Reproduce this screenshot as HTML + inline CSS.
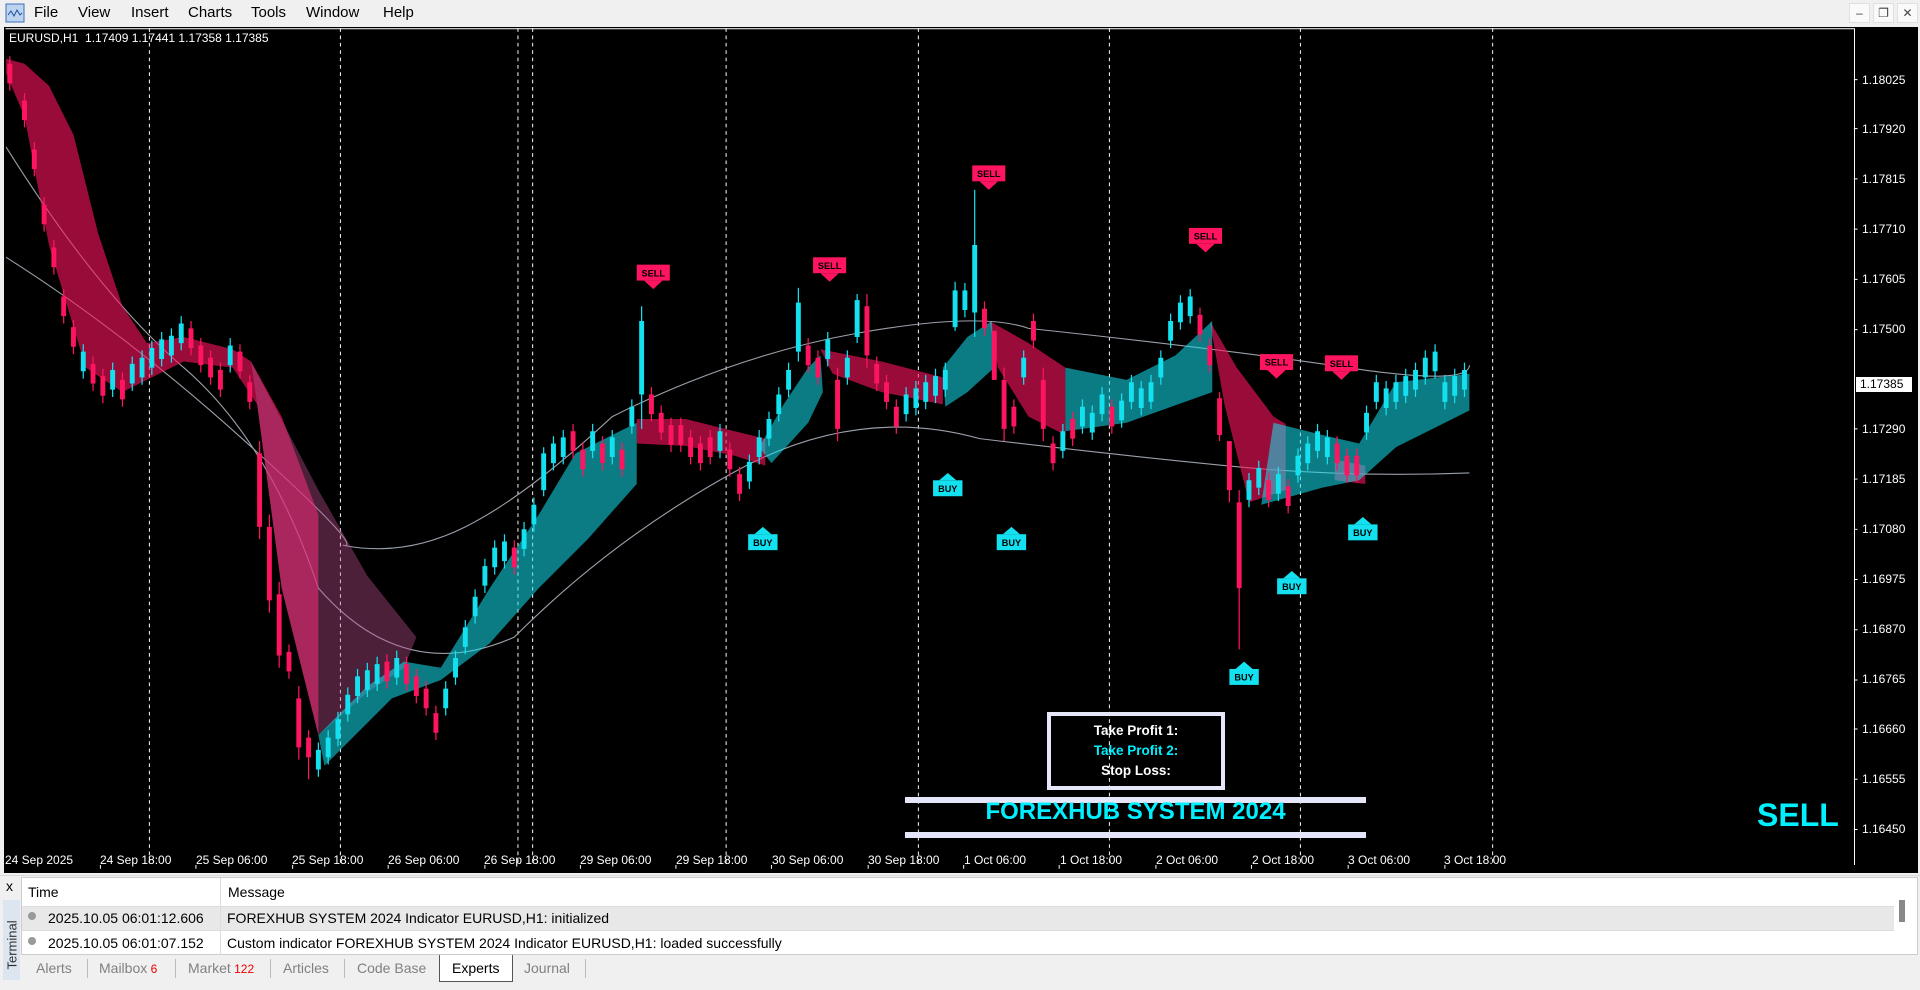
<!DOCTYPE html>
<html><head><meta charset="utf-8"><style>
*{margin:0;padding:0;box-sizing:border-box}
body{width:1920px;height:990px;overflow:hidden;background:#f0f0f0;font-family:"Liberation Sans",sans-serif;position:relative}
.a{position:absolute;white-space:nowrap}
.menu span{position:absolute;top:4px;font-size:15px;color:#000}
.wb{position:absolute;top:3px;width:21px;height:20px;background:#fafafa;border:1px solid #e0e0e0;font-size:12px;color:#444;text-align:center;line-height:18px}
.tl{position:absolute;top:853px;font-size:12px;color:#fff}
.pl{position:absolute;left:1862px;font-size:12px;color:#fff}
.tab{position:absolute;top:960px;font-size:14px;color:#808080}
</style></head><body>
<div class="menu">
<svg class="a" style="left:5px;top:3px" width="20" height="20" viewBox="0 0 20 20"><rect x="1" y="1" width="18" height="18" fill="#bcd4f0" stroke="#3a6fb8"/><path d="M3 12l3-4 3 5 3-6 3 5 2-2" stroke="#1f4f9a" fill="none"/></svg>
<span style="left:34px">File</span><span style="left:78px">View</span><span style="left:131px">Insert</span><span style="left:188px">Charts</span><span style="left:251px">Tools</span><span style="left:306px">Window</span><span style="left:383px">Help</span>
</div>
<div class="wb" style="left:1849px">–</div><div class="wb" style="left:1873px">❐</div><div class="wb" style="left:1897px">✕</div>
<div class="a" style="left:4px;top:27px;width:1914px;height:846px;background:#000"></div>
<svg class="a" style="left:0;top:0" width="1920" height="990" viewBox="0 0 1568 808" preserveAspectRatio="none">
<path d="M4.5 23.5H1514.5V706" stroke="#fff" stroke-width="0.8" fill="none"/>
<g stroke="#fff" stroke-width="0.8" stroke-dasharray="3,3">
<path d="M122 23V706M278 23V706M423 23V706M435 23V706M593 23V706M750 23V706M906 23V706M1062 23V706M1219 23V706"/></g>
<g stroke="#9aa0aa" stroke-width="0.9" fill="none">
<path d="M5 210Q100 270 200 360T280 445Q330 455 380 430T500 340Q600 290 700 272T840 268Q1000 285 1100 300T1200 298"/>
<path d="M5 120Q80 240 150 300T260 480Q330 560 420 520Q500 440 600 385T800 358Q900 370 1000 380T1200 386"/>
</g>
<g fill="#ff1460" opacity="0.6">
<path d="M5 60L20 95L40 200L70 300L100 320L150 295L190 300L210 330L230 480L260 600L260 420L230 340L205 295L190 285L150 275L120 280L100 250L80 190L60 110L40 70L20 52L5 48Z"/>
<path d="M520 342L560 342L600 352L625 358L625 380L600 372L560 364L520 362Z"/>
<path d="M670 285L720 295L770 308L770 330L720 320L680 305Z"/>
<path d="M808 262L840 280L870 300L870 355L840 340L815 300Z"/>
<path d="M988 262L1010 300L1040 340L1050 346L1050 400L1020 410L1000 330Z"/>
<path d="M1090 375L1115 380L1115 395L1090 392Z"/>
</g>
<path d="M205 295L260 400L300 470L340 520L330 545L300 565L260 600L230 480L210 330Z" fill="#c05090" opacity="0.4"/>
<g fill="#14e1f0" opacity="0.55">
<path d="M260 600L300 560L330 540L360 545L400 480L440 420L470 370L520 345L520 395L480 440L440 480L400 525L360 555L320 570L290 600L265 625Z"/>
<path d="M620 365L640 330L660 300L670 290L672 320L660 345L630 378Z"/>
<path d="M770 300L790 275L810 262L812 300L790 320L772 332Z"/>
<path d="M870 300L920 310L960 290L990 262L990 320L920 345L870 352Z"/>
<path d="M1040 345L1080 355L1110 362L1140 312L1200 305L1200 335L1140 365L1110 392L1080 398L1030 412Z"/>
</g>
<path stroke="#ff1460" stroke-width="1" d="M8 46v28M20 76v28M28 116v28M36 161v28M44 196v28M52 236v28M60 261v28M76 291v28M84 301v28M100 304v28M156 262v28M164 276v28M172 286v28M180 296v28M196 281v28M204 306v28M212 360v80M220 420v80M228 475v70M236 526v28M244 560v60M252 596v40M316 534v28M332 536v28M340 546v28M348 556v28M356 576v28M420 441v28M468 346v28M476 361v28M492 356v28M508 361v28M532 316v28M540 331v28M548 341v28M556 341v28M564 351v28M572 356v28M580 351v28M596 361v28M604 381v28M660 276v28M668 286v28M684 300v60M708 240v60M716 291v28M724 306v28M732 326v28M804 246v28M812 270v40M820 300v60M828 326v28M844 256v28M852 300v60M860 356v28M876 336v28M908 326v28M980 251v28M988 276v28M996 320v40M1004 360v50M1012 400v130M1036 386v28M1052 391v28M1092 356v28M1100 366v28M1108 366v28"/>
<path fill="#ff1460" d="M6 52h4v16h-4zM18 82h4v16h-4zM26 122h4v16h-4zM34 167h4v16h-4zM42 202h4v16h-4zM50 242h4v16h-4zM58 267h4v16h-4zM74 297h4v16h-4zM82 307h4v16h-4zM98 310h4v16h-4zM154 268h4v16h-4zM162 282h4v16h-4zM170 292h4v16h-4zM178 302h4v16h-4zM194 287h4v16h-4zM202 312h4v16h-4zM210 370h4v60h-4zM218 430h4v60h-4zM226 485h4v50h-4zM234 532h4v16h-4zM242 570h4v40h-4zM250 602h4v16h-4zM314 540h4v16h-4zM330 542h4v16h-4zM338 552h4v16h-4zM346 562h4v16h-4zM354 582h4v16h-4zM418 447h4v16h-4zM466 352h4v16h-4zM474 367h4v16h-4zM490 362h4v16h-4zM506 367h4v16h-4zM530 322h4v16h-4zM538 337h4v16h-4zM546 347h4v16h-4zM554 347h4v16h-4zM562 357h4v16h-4zM570 362h4v16h-4zM578 357h4v16h-4zM594 367h4v16h-4zM602 387h4v16h-4zM658 282h4v16h-4zM666 292h4v16h-4zM682 310h4v40h-4zM706 250h4v40h-4zM714 297h4v16h-4zM722 312h4v16h-4zM730 332h4v16h-4zM802 252h4v16h-4zM810 270h4v40h-4zM818 310h4v40h-4zM826 332h4v16h-4zM842 262h4v16h-4zM850 310h4v40h-4zM858 362h4v16h-4zM874 342h4v16h-4zM906 332h4v16h-4zM978 257h4v16h-4zM986 282h4v16h-4zM994 325h4v30h-4zM1002 360h4v40h-4zM1010 410h4v70h-4zM1034 392h4v16h-4zM1050 397h4v16h-4zM1090 362h4v16h-4zM1098 372h4v16h-4zM1106 372h4v16h-4z"/>
<path stroke="#14e1f0" stroke-width="1" d="M68 281v28M92 296v28M108 291v28M116 286v28M124 278v28M132 271v28M140 268v28M148 258v28M188 276v28M260 606v28M268 596v28M276 581v28M284 561v28M292 546v28M300 541v28M308 536v28M324 531v28M364 556v28M372 531v28M380 506v28M388 481v28M396 456v28M404 441v28M412 436v28M428 426v28M436 406v28M444 365v40M452 356v28M460 351v28M484 346v28M500 351v28M516 326v28M524 250v100M588 346v28M612 371v28M620 351v28M628 336v28M636 316v28M644 296v28M652 235v60M676 271v28M692 286v28M700 240v40M740 316v28M748 311v28M756 306v28M764 301v28M772 296v28M780 230v40M788 231v28M796 155v120M836 286v28M868 346v28M884 326v28M892 331v28M900 316v28M916 321v28M924 306v28M932 311v28M940 306v28M948 286v28M956 256v28M964 241v28M972 236v28M1020 386v28M1028 376v28M1044 381v28M1060 366v28M1068 356v28M1076 346v28M1084 351v28M1116 331v28M1124 306v28M1132 311v28M1140 306v28M1148 301v28M1156 296v28M1164 286v28M1172 281v28M1180 306v28M1188 301v28M1196 296v28"/>
<path fill="#14e1f0" d="M66 287h4v16h-4zM90 302h4v16h-4zM106 297h4v16h-4zM114 292h4v16h-4zM122 284h4v16h-4zM130 277h4v16h-4zM138 274h4v16h-4zM146 264h4v16h-4zM186 282h4v16h-4zM258 612h4v16h-4zM266 602h4v16h-4zM274 587h4v16h-4zM282 567h4v16h-4zM290 552h4v16h-4zM298 547h4v16h-4zM306 542h4v16h-4zM322 537h4v16h-4zM362 562h4v16h-4zM370 537h4v16h-4zM378 512h4v16h-4zM386 487h4v16h-4zM394 462h4v16h-4zM402 447h4v16h-4zM410 442h4v16h-4zM426 432h4v16h-4zM434 412h4v16h-4zM442 370h4v30h-4zM450 362h4v16h-4zM458 357h4v16h-4zM482 352h4v16h-4zM498 357h4v16h-4zM514 332h4v16h-4zM522 262h4v60h-4zM586 352h4v16h-4zM610 377h4v16h-4zM618 357h4v16h-4zM626 342h4v16h-4zM634 322h4v16h-4zM642 302h4v16h-4zM650 247h4v40h-4zM674 277h4v16h-4zM690 292h4v16h-4zM698 245h4v30h-4zM738 322h4v16h-4zM746 317h4v16h-4zM754 312h4v16h-4zM762 307h4v16h-4zM770 302h4v16h-4zM778 237h4v30h-4zM786 237h4v16h-4zM794 200h4v55h-4zM834 292h4v16h-4zM866 352h4v16h-4zM882 332h4v16h-4zM890 337h4v16h-4zM898 322h4v16h-4zM914 327h4v16h-4zM922 312h4v16h-4zM930 317h4v16h-4zM938 312h4v16h-4zM946 292h4v16h-4zM954 262h4v16h-4zM962 247h4v16h-4zM970 242h4v16h-4zM1018 392h4v16h-4zM1026 382h4v16h-4zM1042 387h4v16h-4zM1058 372h4v16h-4zM1066 362h4v16h-4zM1074 352h4v16h-4zM1082 357h4v16h-4zM1114 337h4v16h-4zM1122 312h4v16h-4zM1130 317h4v16h-4zM1138 312h4v16h-4zM1146 307h4v16h-4zM1154 302h4v16h-4zM1162 292h4v16h-4zM1170 287h4v16h-4zM1178 312h4v16h-4zM1186 307h4v16h-4zM1194 302h4v16h-4z"/>
<g font-family="Liberation Sans,sans-serif" font-weight="bold" font-size="7.5" text-anchor="middle">
<g fill="#ff1460"><rect x="520" y="216" width="27" height="13"/><path d="M526 229h15l-7.5 7z"/><rect x="664" y="210" width="27" height="13"/><path d="M670 223h15l-7.5 7z"/><rect x="794" y="135" width="27" height="13"/><path d="M800 148h15l-7.5 7z"/><rect x="971" y="186" width="27" height="13"/><path d="M977 199h15l-7.5 7z"/><rect x="1029" y="289" width="27" height="13"/><path d="M1035 302h15l-7.5 7z"/><rect x="1082" y="290" width="27" height="13"/><path d="M1088 303h15l-7.5 7z"/></g>
<g fill="#000"><text x="533.5" y="225.5">SELL</text><text x="677.5" y="219.5">SELL</text><text x="807.5" y="144.5">SELL</text><text x="984.5" y="195.5">SELL</text><text x="1042.5" y="298.5">SELL</text><text x="1095.5" y="299.5">SELL</text></g>
<g fill="#14e1f0"><rect x="611" y="436" width="24" height="13"/><path d="M616 436h14l-7-6z"/><rect x="762" y="392" width="24" height="13"/><path d="M767 392h14l-7-6z"/><rect x="814" y="436" width="24" height="13"/><path d="M819 436h14l-7-6z"/><rect x="1043" y="472" width="24" height="13"/><path d="M1048 472h14l-7-6z"/><rect x="1004" y="546" width="24" height="13"/><path d="M1009 546h14l-7-6z"/><rect x="1101" y="428" width="24" height="13"/><path d="M1106 428h14l-7-6z"/></g>
<g fill="#000"><text x="623" y="445.5">BUY</text><text x="774" y="401.5">BUY</text><text x="826" y="445.5">BUY</text><text x="1055" y="481.5">BUY</text><text x="1016" y="555.5">BUY</text><text x="1113" y="437.5">BUY</text></g>
</g>
<path stroke="#fff" stroke-width="0.8" d="M1514 65h3M1514 105h3M1514 146h3M1514 187h3M1514 228h3M1514 269h3M1514 350h3M1514 391h3M1514 432h3M1514 473h3M1514 514h3M1514 555h3M1514 595h3M1514 636h3M1514 677h3M82 706v3M160 706v3M239 706v3M317 706v3M396 706v3M474 706v3M552 706v3M630 706v3M709 706v3M787 706v3M865 706v3M944 706v3M1022 706v3M1101 706v3M1180 706v3"/>
</svg>
<div class="a" style="left:9px;top:31px;font-size:12px;color:#fff">EURUSD,H1&nbsp; 1.17409 1.17441 1.17358 1.17385</div>
<div class="pl" style="top:73px">1.18025</div><div class="pl" style="top:122px">1.17920</div><div class="pl" style="top:172px">1.17815</div><div class="pl" style="top:222px">1.17710</div><div class="pl" style="top:272px">1.17605</div><div class="pl" style="top:322px">1.17500</div><div class="pl" style="top:422px">1.17290</div><div class="pl" style="top:472px">1.17185</div><div class="pl" style="top:522px">1.17080</div><div class="pl" style="top:572px">1.16975</div><div class="pl" style="top:622px">1.16870</div><div class="pl" style="top:672px">1.16765</div><div class="pl" style="top:722px">1.16660</div><div class="pl" style="top:772px">1.16555</div><div class="pl" style="top:822px">1.16450</div>
<div class="a" style="left:1856px;top:377px;width:56px;height:15px;background:#fff;color:#000;font-size:12px;padding-left:4px;line-height:15px">1.17385</div>
<div class="tl" style="left:5px">24 Sep 2025</div><div class="tl" style="left:100px">24 Sep 18:00</div><div class="tl" style="left:196px">25 Sep 06:00</div><div class="tl" style="left:292px">25 Sep 18:00</div><div class="tl" style="left:388px">26 Sep 06:00</div><div class="tl" style="left:484px">26 Sep 18:00</div><div class="tl" style="left:580px">29 Sep 06:00</div><div class="tl" style="left:676px">29 Sep 18:00</div><div class="tl" style="left:772px">30 Sep 06:00</div><div class="tl" style="left:868px">30 Sep 18:00</div><div class="tl" style="left:964px">1 Oct 06:00</div><div class="tl" style="left:1060px">1 Oct 18:00</div><div class="tl" style="left:1156px">2 Oct 06:00</div><div class="tl" style="left:1252px">2 Oct 18:00</div><div class="tl" style="left:1348px">3 Oct 06:00</div><div class="tl" style="left:1444px">3 Oct 18:00</div>
<div class="a" style="left:1047px;top:712px;width:178px;height:78px;border:4px solid #e6e6fa;color:#fff;font-weight:bold;font-size:13.5px;text-align:center;line-height:20px;padding-top:5px">Take Profit 1:<br><span style="color:#00f0ff">Take Profit 2:</span><br>Stop Loss:</div>
<div class="a" style="left:905px;top:797px;width:461px;height:6px;background:#e6e6fa"></div>
<div class="a" style="left:905px;top:832px;width:461px;height:6px;background:#e6e6fa"></div>
<div class="a" style="left:905px;top:798px;width:461px;text-align:center;font-size:24px;font-weight:bold;color:#00f0ff">FOREXHUB SYSTEM 2024</div>
<div class="a" style="left:1757px;top:797px;font-size:32px;font-weight:bold;color:#00f0ff">SELL</div>
<div class="a" style="left:0;top:875px;width:1920px;height:115px;background:#f0f0f0;border-top:1px solid #d8d8d8"></div>
<div class="a" style="left:6px;top:878px;font-size:14px;color:#000">x</div>
<div class="a" style="left:3px;top:900px;width:17px;height:80px;background:#dde6f0"></div>
<div class="a" style="left:-18px;top:932px;transform:rotate(-90deg);font-size:13px;color:#333;width:60px">Terminal</div>
<div class="a" style="left:21px;top:877px;width:1897px;height:78px;background:#fff;border:1px solid #ccc"></div>
<div class="a" style="left:22px;top:906px;width:1872px;height:25px;background:#e8e8e8;border-top:1px solid #ddd;border-bottom:1px solid #ddd"></div>
<div class="a" style="left:220px;top:878px;width:1px;height:77px;background:#ddd"></div>
<div class="a" style="left:28px;top:884px;font-size:14px">Time</div><div class="a" style="left:228px;top:884px;font-size:14px">Message</div>
<div class="a" style="left:28px;top:912px;width:8px;height:8px;border-radius:50%;background:#999"></div>
<div class="a" style="left:28px;top:937px;width:8px;height:8px;border-radius:50%;background:#999"></div>
<div class="a" style="left:48px;top:910px;font-size:14px">2025.10.05 06:01:12.606</div><div class="a" style="left:227px;top:910px;font-size:14px">FOREXHUB SYSTEM 2024 Indicator EURUSD,H1: initialized</div>
<div class="a" style="left:48px;top:935px;font-size:14px">2025.10.05 06:01:07.152</div><div class="a" style="left:227px;top:935px;font-size:14px">Custom indicator FOREXHUB SYSTEM 2024 Indicator EURUSD,H1: loaded successfully</div>
<div class="a" style="left:1899px;top:900px;width:6px;height:22px;background:#888"></div>
<div class="a" style="left:439px;top:955px;width:74px;height:27px;background:#fff;border:1px solid #555;border-top:none"></div>
<div class="tab" style="left:36px">Alerts</div><div class="tab" style="left:99px">Mailbox<span style="color:#e00;font-size:12px"> 6</span></div><div class="tab" style="left:188px">Market<span style="color:#e00;font-size:12px"> 122</span></div><div class="tab" style="left:283px">Articles</div><div class="tab" style="left:357px">Code Base</div><div class="tab" style="left:452px;color:#000">Experts</div><div class="tab" style="left:524px">Journal</div>
<div class="a" style="left:87px;top:959px;width:1px;height:19px;background:#bbb"></div><div class="a" style="left:175px;top:959px;width:1px;height:19px;background:#bbb"></div><div class="a" style="left:270px;top:959px;width:1px;height:19px;background:#bbb"></div><div class="a" style="left:344px;top:959px;width:1px;height:19px;background:#bbb"></div><div class="a" style="left:585px;top:959px;width:1px;height:19px;background:#bbb"></div>
</body></html>
